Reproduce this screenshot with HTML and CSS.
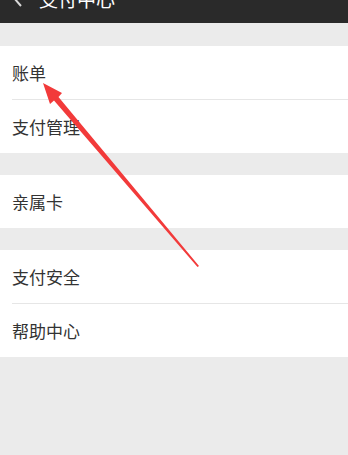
FILE: index.html
```html
<!DOCTYPE html>
<html lang="zh-CN">
<head>
<meta charset="utf-8">
<title>支付中心</title>
<link rel="stylesheet" href="styles.css">
</head>
<body>
<div class="page">
  <header class="topbar">
    <svg class="back" width="10" height="18" viewBox="0 0 10 18"><path d="M8 1 L1 9 L8 17" fill="none" stroke="#d8d8d8" stroke-width="2"/></svg>
    <span class="title">支付中心</span>
  </header>
  <section class="group">
    <div class="row">账单</div>
    <div class="row">支付管理</div>
  </section>
  <section class="group">
    <div class="row">亲属卡</div>
  </section>
  <section class="group">
    <div class="row">支付安全</div>
    <div class="row">帮助中心</div>
  </section>
  <svg class="arrow" width="348" height="455" viewBox="0 0 348 455">
    <polygon points="43,83 62,93 58.5,97 199,266 197.5,267 54,100.5 50,104" fill="#f23a3a"/>
  </svg>
</div>
</body>
</html>
```
FILE: styles.css
```css
* { box-sizing: border-box; }
html, body { margin: 0; padding: 0; }
body {
  background: #ebebeb;
  font-family: "Noto Sans CJK SC", "Noto Sans", sans-serif;
  width: 348px;
  height: 455px;
  overflow: hidden;
}
.page {
  position: relative;
  width: 348px;
  height: 455px;
  display: flex;
  flex-direction: column;
  gap: 22px;
}
.topbar {
  height: 50px;
  margin-top: -27px;
  margin-bottom: 1px;
  background: #2a2a2a;
  display: flex;
  align-items: center;
  padding-left: 13px;
  gap: 16px;
  color: #ffffff;
  flex-shrink: 0;
}
.title {
  font-size: 19px;
  line-height: 1;
}
.back { display: block; }
.group {
  background: #ffffff;
  padding-left: 12px;
}
.row {
  height: 53px;
  display: flex;
  align-items: center;
  font-size: 17px;
  color: #333333;
}
.row + .row {
  border-top: 1px solid #e6e6e6;
  height: 54px;
}
.arrow {
  position: absolute;
  left: 0;
  top: 0;
  pointer-events: none;
}
```
